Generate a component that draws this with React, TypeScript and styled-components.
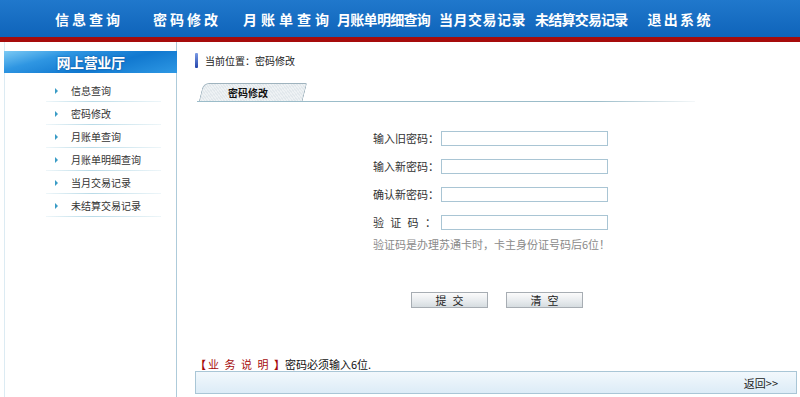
import styled, { createGlobalStyle } from "styled-components"

const GlobalStyle = createGlobalStyle`
    html, body {
        margin: 0;
        padding: 0;
        background: #ffffff;
        overflow: hidden;
    }
    body {
        font-family: "Noto Sans CJK SC", "Liberation Sans", sans-serif;
        color: #333;
    }
`

const Page = styled.div`
    width: 800px;
    height: 397px;
    display: flex;
    flex-direction: column;
`

const Header = styled.div`
    height: 37px;
    background: linear-gradient(#2078cc, #0f64ba);
    border-bottom: 5px solid #a60c0c;
    display: flex;
    align-items: center;
    padding-left: 55px;
`

const NavItem = styled.a<{ $ls: number; $ml: number }>`
    color: #ffffff;
    font-size: 14px;
    font-weight: bold;
    letter-spacing: ${(p) => p.$ls}px;
    margin-left: ${(p) => p.$ml}px;
    white-space: nowrap;
    line-height: 16px;
    cursor: pointer;
`

const Body = styled.div`
    flex: 1;
    display: flex;
`

const Sider = styled.div`
    width: 177px;
    padding-left: 4px;
    box-sizing: border-box;
`

const SiderPanel = styled.div`
    height: 100%;
    border-left: 1px solid #dcebf3;
    border-right: 1px solid #aecbda;
    padding-top: 9px;
    box-sizing: border-box;
`

const SiderTitle = styled.div`
    height: 22px;
    margin-left: -1px;
    margin-right: -1px;
    background: linear-gradient(165deg, #7ccaf4 0%, #2f96e2 28%, #1178cf 60%, #2e98e4 100%);
    color: #fff;
    font-size: 14px;
    font-weight: bold;
    letter-spacing: -0.4px;
    display: flex;
    align-items: center;
    justify-content: center;
    text-shadow: 0 0 2px #0a4f96;
`

const Menu = styled.ul`
    list-style: none;
    margin: 6px 0 0 0;
    padding: 0;
`

const MenuItem = styled.li`
    height: 23px;
    display: flex;
    align-items: center;
    position: relative;
    font-size: 10px;
    color: #333;

    &::after {
        content: "";
        position: absolute;
        left: 41px;
        width: 115px;
        bottom: 0;
        height: 1px;
        background: linear-gradient(to right, rgba(170, 210, 225, 0.2), #b9dbe8 40%, rgba(170, 210, 225, 0.2));
    }
`

const Arrow = styled.span`
    width: 0;
    height: 0;
    border-top: 3px solid transparent;
    border-bottom: 3px solid transparent;
    border-left: 3px solid #3a9cc6;
    margin-left: 50px;
    margin-right: 13px;
`

const Content = styled.div`
    flex: 1;
    padding: 11px 3px 0 18px;
    display: flex;
    flex-direction: column;
`

const Breadcrumb = styled.div`
    height: 15px;
    display: flex;
    align-items: center;
    font-size: 10px;
    color: #222;

    &::before {
        content: "";
        width: 3px;
        height: 15px;
        margin-right: 7px;
        border-radius: 1px;
        background: linear-gradient(#7c9ce6, #2444aa);
    }
`

const TabStrip = styled.div`
    margin-top: 15px;
    margin-left: 2px;
    width: 498px;
    height: 18px;
    border-bottom: 1px solid;
    border-image: linear-gradient(to right, #9bbcc9 80%, rgba(155, 188, 201, 0.1)) 1;
    display: flex;
    align-items: flex-end;
`

const Tab = styled.div`
    position: relative;
    width: 104px;
    height: 18px;
    margin-left: 4px;
    display: flex;
    align-items: center;
    padding-left: 27px;
    box-sizing: border-box;
    font-size: 10px;
    font-weight: bold;
    color: #111;

    &::before {
        content: "";
        position: absolute;
        inset: 0;
        transform: skewX(-14deg);
        border: 1px solid #9fb3be;
        border-bottom: none;
        border-radius: 6px 2px 0 0;
        background: repeating-linear-gradient(45deg, #eef2f4 0 1px, #e2e8ec 1px 2px);
        z-index: 0;
    }

    span {
        position: relative;
    }
`

const Form = styled.div`
    margin-top: 29px;
    margin-left: 178px;
    display: grid;
    grid-template-columns: 68px 167px;
    row-gap: 13px;
    align-items: center;
`

const Label = styled.label<{ $ls?: number }>`
    font-size: 11px;
    color: #333;
    line-height: 15px;
    letter-spacing: ${(p) => p.$ls ?? 0}px;
    white-space: nowrap;
`

const Input = styled.input`
    width: 167px;
    height: 15px;
    box-sizing: border-box;
    border: 1px solid #a9c5d4;
    padding: 0 2px;
    font-size: 11px;
    outline: none;
`

const Hint = styled.div`
    grid-column: 1 / span 2;
    margin-top: -7px;
    font-size: 11px;
    color: #8a8a8a;
    white-space: nowrap;
`

const Actions = styled.div`
    margin-top: 40px;
    margin-left: 216px;
    display: flex;
    gap: 18px;
`

const Button = styled.button`
    width: 77px;
    height: 16px;
    padding: 0;
    border: 1px solid #a7adb3;
    background: linear-gradient(#fbfbfb, #e6eaed 60%, #d6dce0);
    font-family: "Noto Sans CJK SC", sans-serif;
    font-size: 11px;
    line-height: 14px;
    letter-spacing: 6px;
    text-indent: 6px;
    color: #222;
`

const Note = styled.div`
    margin-top: 49px;
    font-size: 11px;
    line-height: 14px;
    color: #111;
    white-space: nowrap;
`

const NoteTag = styled.span`
    color: #a50c0c;
    font-weight: bold;
`

const NoteWords = styled.span`
    font-weight: normal;
    letter-spacing: 5.5px;
    margin-left: 2px;
`

const FootBar = styled.div`
    height: 23px;
    box-sizing: border-box;
    border: 1px solid #a9c6d6;
    background: linear-gradient(#f2f8fc, #dcecf7);
    display: flex;
    align-items: center;
    justify-content: flex-end;
    padding-right: 18px;
    font-size: 11px;
    color: #222;
`

const navs = [
    { text: "信息查询", ls: 3, ml: 0 },
    { text: "密码修改", ls: 3, ml: 30 },
    { text: "月账单查询", ls: 4, ml: 22 },
    { text: "月账单明细查询", ls: -0.7, ml: 4 },
    { text: "当月交易记录", ls: 0.5, ml: 9 },
    { text: "未结算交易记录", ls: -0.8, ml: 9 },
    { text: "退出系统", ls: 2.3, ml: 20 },
]

const menus = ["信息查询", "密码修改", "月账单查询", "月账单明细查询", "当月交易记录", "未结算交易记录"]

const App = () => {
    return (
        <>
            <GlobalStyle />
            <Page>
                <Header>
                    {navs.map((n) => (
                        <NavItem key={n.text} $ls={n.ls} $ml={n.ml}>{n.text}</NavItem>
                    ))}
                </Header>
                <Body>
                    <Sider>
                        <SiderPanel>
                            <SiderTitle>网上营业厅</SiderTitle>
                            <Menu>
                                {menus.map((m) => (
                                    <MenuItem key={m}>
                                        <Arrow />
                                        {m}
                                    </MenuItem>
                                ))}
                            </Menu>
                        </SiderPanel>
                    </Sider>
                    <Content>
                        <Breadcrumb>当前位置：密码修改</Breadcrumb>
                        <TabStrip>
                            <Tab><span>密码修改</span></Tab>
                        </TabStrip>
                        <Form>
                            <Label>输入旧密码：</Label>
                            <Input type="password" />
                            <Label>输入新密码：</Label>
                            <Input type="password" />
                            <Label>确认新密码：</Label>
                            <Input type="password" />
                            <Label $ls={6.3}>验证码：</Label>
                            <Input type="text" />
                            <Hint>验证码是办理苏通卡时，卡主身份证号码后6位！</Hint>
                        </Form>
                        <Actions>
                            <Button>提交</Button>
                            <Button>清空</Button>
                        </Actions>
                        <Note>
                            <NoteTag>【<NoteWords>业务说明</NoteWords>】</NoteTag>密码必须输入6位.
                        </Note>
                        <FootBar>返回&gt;&gt;</FootBar>
                    </Content>
                </Body>
            </Page>
        </>
    )
}

export default App
